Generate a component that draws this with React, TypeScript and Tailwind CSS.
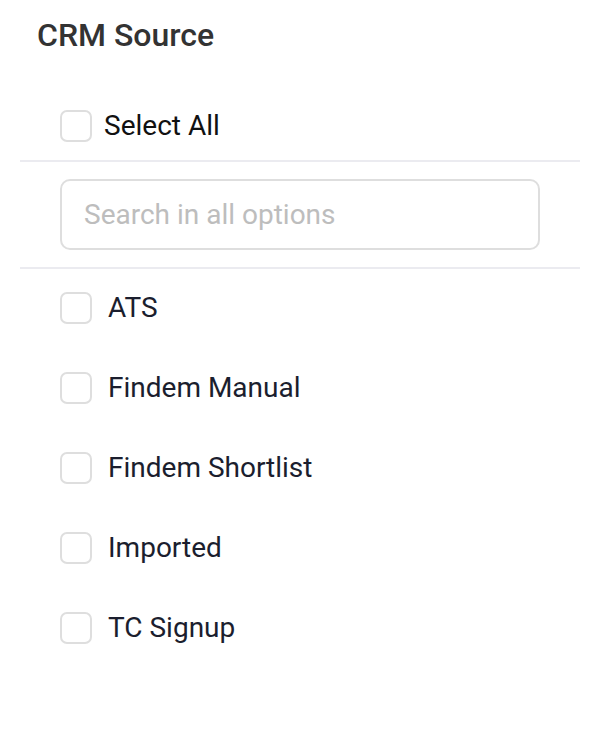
import React from "react";

const items = ["ATS", "Findem Manual", "Findem Shortlist", "Imported", "TC Signup"];

function Box() {
  return <span className="block w-[32px] h-[32px] shrink-0 rounded-[7px] border-2 border-[#dedede] bg-white" />;
}

export default function App() {
  return (
    <div
      className="w-[610px] h-[738px] bg-white pl-[20px] pr-[30px]"
      style={{ fontFamily: "Roboto, 'Liberation Sans', sans-serif" }}
    >
      <div className="pt-[15px] pl-[17px] text-[32px] leading-[40px] font-medium text-[#333333]">CRM Source</div>
      <label className="mt-[55px] mb-[18px] ml-[40px] flex items-center gap-[12px]">
        <Box />
        <span className="text-[28px] leading-[32px] text-[#111111]">Select All</span>
      </label>
      <div className="h-[2px] bg-[#ebebf0]" />
      <div className="mx-[40px] mt-[17px] mb-[17px] h-[71px] rounded-[10px] border-2 border-[#dedede] flex items-center px-[22px]">
        <input
          className="w-full outline-none text-[28px] text-[#333] placeholder:text-[#bdbdbd] bg-transparent"
          placeholder="Search in all options"
        />
      </div>
      <div className="h-[2px] bg-[#ebebf0]" />
      <div className="mt-[23px] ml-[40px] flex flex-col gap-[48px]">
        {items.map((it) => (
          <label key={it} className="flex items-center gap-[16px]">
            <Box />
            <span className="text-[28px] leading-[32px] text-[#1b1e2e]">{it}</span>
          </label>
        ))}
      </div>
    </div>
  );
}
